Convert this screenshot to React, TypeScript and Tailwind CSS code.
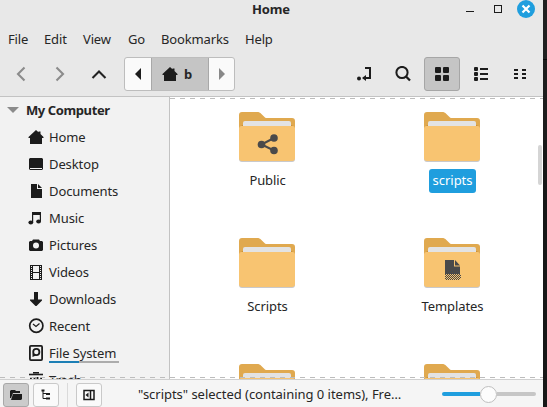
import React from "react";

const INK = "#1c1c1c";

const menus = [
  { label: "File", w: "w-[20px]" },
  { label: "Edit", w: "w-[23px]" },
  { label: "View", w: "w-[29px]" },
  { label: "Go", w: "w-[17px]" },
  { label: "Bookmarks", w: "w-[68px]" },
  { label: "Help", w: "w-[28px]" },
];

function HomeIcon() {
  return (
    <svg width="16" height="16" viewBox="0 0 16 16" fill={INK}>
      <path d="M8 1 L10.5 3.2 V2.5 H12.5 V5 L15.5 8 V9 H14 V15 H2 V9 H.5 V8 Z" />
    </svg>
  );
}

const places: { label: string; icon: React.ReactNode }[] = [
  { label: "Home", icon: <HomeIcon /> },
  {
    label: "Desktop",
    icon: (
      <svg width="16" height="16" viewBox="0 0 16 16">
        <path d="M2 2h12l1 1v10l-1 1H2l-1-1V3z" fill={INK} />
        <path d="M2 12h12v1H2z" fill="#f2f2f2" />
      </svg>
    ),
  },
  {
    label: "Documents",
    icon: (
      <svg width="16" height="16" viewBox="0 0 16 16">
        <path d="M3 1h6v5h5v9H3z" fill={INK} />
        <path d="M10 1l4 4h-4z" fill={INK} />
      </svg>
    ),
  },
  {
    label: "Music",
    icon: (
      <svg width="16" height="16" viewBox="0 0 16 16" fill={INK}>
        <path d="M4 2h9v9.5h-1.2V5H5.2v7.500H4z" />
        <ellipse cx="2.8" cy="12.500" rx="2.400" ry="1.900" />
        <ellipse cx="10.600" cy="11.500" rx="2.400" ry="1.900" />
      </svg>
    ),
  },
  {
    label: "Pictures",
    icon: (
      <svg width="16" height="16" viewBox="0 0 16 16">
        <path d="M5 2.500h6l1 1.500h2l1 1v8l-1 1H2l-1-1V5l1-1h2z" fill={INK} />
        <circle cx="8" cy="8.500" r="3" fill="#f2f2f2" />
      </svg>
    ),
  },
  {
    label: "Videos",
    icon: (
      <svg width="16" height="16" viewBox="0 0 16 16">
        <path d="M2 1h12v15H2z" fill={INK} />
        <path d="M5 2h6v6H5zM5 9h6v6H5z" fill="#f2f2f2" />
        <path d="M3.500 2v14M12.500 2v14" stroke="#f2f2f2" strokeDasharray="1 1" />
      </svg>
    ),
  },
  {
    label: "Downloads",
    icon: (
      <svg width="16" height="16" viewBox="0 0 16 16" fill={INK}>
        <path d="M6 1h4v7.500h4v1L8.500 15h-1L2 9.500v-1h4z" />
      </svg>
    ),
  },
  {
    label: "Recent",
    icon: (
      <svg width="16" height="16" viewBox="0 0 16 16" fill="none" stroke={INK}>
        <circle cx="8.300" cy="7.700" r="6.600" strokeWidth="1.700" />
        <path d="M5 6l3 2.500L11.500 5.500" strokeWidth="1.200" />
      </svg>
    ),
  },
  {
    label: "File System",
    icon: (
      <svg width="16" height="16" viewBox="0 0 16 16" fill="none" stroke={INK}>
        <rect x="1.900" y=".9" width="12.200" height="14.200" rx="1" strokeWidth="1.800" />
        <circle cx="8.300" cy="7" r="3.100" strokeWidth="1.800" />
        <path d="M4.500 12V8.500L8 10.500z" fill={INK} stroke="none" />
      </svg>
    ),
  },
  {
    label: "Trash",
    icon: (
      <svg width="16" height="16" viewBox="0 0 16 16" fill="none" stroke={INK}>
        <path d="M5 .8h6" strokeWidth="1.600" />
        <path d="M1 2.500h14" strokeWidth="1.600" />
        <path d="M2.900 5v9h10.200V5M6.500 5v2M9.500 5v2" strokeWidth="1.800" />
      </svg>
    ),
  },
];

const folders = [
  { label: "Public", kind: "share", selected: false },
  { label: "scripts", kind: "", selected: true },
  { label: "Scripts", kind: "", selected: false },
  { label: "Templates", kind: "template", selected: false },
  { label: "", kind: "", selected: false },
  { label: "", kind: "", selected: false },
];

function Folder({ kind }: { kind: string }) {
  return (
    <svg width="56" height="50" viewBox="0 0 56 50" className="block shrink-0">
      <path d="M0 3a3 3 0 0 1 3-3h15c2 0 3 .6 4.400 2L26 5.500c.6.500 1 .5 2 .5h25a3 3 0 0 1 3 3v12H0z" fill="#e0a94f" />
      <path d="M0 15l4-2v3H0zM56 15l-4-2v3h4z" fill="#c38a35" />
      <path d="M4 18v-7a2 2 0 0 1 2-2h44a2 2 0 0 1 2 2v7z" fill="#e3e3e3" />
      <path d="M0 17h56v30a3 3 0 0 1-3 3H3a3 3 0 0 1-3-3z" fill="#c9c9cb" />
      <path d="M0 16a2 2 0 0 1 2-2h52a2 2 0 0 1 2 2v30a3 3 0 0 1-3 3H3a3 3 0 0 1-3-3z" fill="#f8c471" />
      {kind === "share" && (
        <g fill="#4a4a4a">
          <path d="M35 26L22.500 32.500L35 38.500" fill="none" stroke="#4a4a4a" strokeWidth="2" />
          <circle cx="35" cy="26" r="3.800" />
          <circle cx="22.500" cy="32.500" r="3.800" />
          <circle cx="35" cy="38.500" r="3.800" />
        </g>
      )}
      {kind === "template" && (
        <g>
          <path d="M21 22h9v6.500h6V36H21z" fill="#4a4a4a" />
          <path d="M31 22l5 5.500h-5z" fill="#4a4a4a" />
          <g stroke="#4a4a4a" strokeDasharray="1 1">
            <path d="M21 36.500h15M21 38.500h15M21 40.500h15" />
            <path d="M22 37.500h15M22 39.500h15M22 41.500h14" />
          </g>
        </g>
      )}
    </svg>
  );
}

const dash = "h-px bg-[repeating-linear-gradient(90deg,#bdbdbd_0_5px,transparent_5px_10px)]";
const flatButton = "flex h-[34px] w-9 items-center justify-center";
const statusButton = "flex h-6 w-[26px] items-center justify-center rounded-[3px] border";

export default function App() {
  return (
    <div className="flex h-[407px] w-[547px] overflow-hidden bg-[#171717] font-['Noto_Sans',sans-serif] text-[13px] leading-[18px] text-[#262626]">
      <div className="flex w-[543px] shrink-0 flex-col">
        <header className="flex h-[97px] shrink-0 flex-col border-b border-[#c3c3c3] bg-[#e8e8e8]">
          <div className="flex h-[27px] shrink-0">
            <div className="w-[460px] pl-[252px] pt-px text-[13px] leading-[17px] font-bold">
              <span className="tracking-[-0.2px]">Home</span>
            </div>
            <svg width="83" height="20" viewBox="460 0 83 20">
              <path d="M466 11.500h8" stroke={INK} />
              <rect x="494.500" y="5.500" width="7" height="7" fill="none" stroke={INK} />
              <circle cx="526" cy="9" r="9" fill="#1f9ede" />
              <path d="M522.500 5.500l7 7m0-7l-7 7" stroke="#fff" strokeWidth="2.200" />
            </svg>
          </div>
          <nav className="flex h-6 shrink-0 items-center gap-4 px-2">
            {menus.map((m) => (
              <span key={m.label} className={`${m.w} shrink-0 whitespace-nowrap tracking-[-0.15px]`}>{m.label}</span>
            ))}
          </nav>
          <div className="flex h-[45px] items-start px-[3px] pt-1.5">
            <div className="flex gap-[3px]">
              {["M21.500 10.500l-6.500 6.500 6.500 6.500", "M14.500 10.500l6.500 6.500-6.500 6.500", "M11.500 21l6.500-6.500 6.500 6.500"].map((d, i) => (
                <button key={d} className={flatButton}>
                  <svg width="36" height="34" fill="none" stroke={i === 2 ? "#222" : "#8b8b8b"} strokeWidth="2.100">
                    <path d={d} />
                  </svg>
                </button>
              ))}
            </div>
            <div className="ml-[7px] flex h-[34px] w-[111px] overflow-hidden rounded-[3px] border border-[#bdbdbd] bg-[#fafafa]">
              <div className="flex w-[26px] items-center justify-center">
                <svg width="6" height="12"><path d="M6 0v12L0 6z" fill={INK} /></svg>
              </div>
              <div className="flex w-[58px] items-center border-x border-[#a8a8a8] bg-[#c5c5c5] pl-[10px] font-bold">
                <HomeIcon />
                <span className="ml-[6px]">b</span>
              </div>
              <div className="flex flex-1 items-center justify-center">
                <svg width="6" height="12"><path d="M0 0v12L6 6z" fill="#888" /></svg>
              </div>
            </div>
            <div className="ml-auto mr-[2px] flex gap-[3px]">
              <button className={flatButton}>
                <svg width="16" height="16" fill="none" stroke={INK} strokeWidth="2">
                  <path d="M9 2h5v10H7" />
                  <path d="M10 9v6L6 12z" fill={INK} stroke="none" />
                  <circle cx="3" cy="12.500" r="2" fill={INK} stroke="none" />
                </svg>
              </button>
              <button className={`${flatButton} pr-px`}>
                <svg width="16" height="16" fill="none" stroke={INK} strokeWidth="2">
                  <circle cx="7" cy="6.500" r="5.600" />
                  <path d="M11 10.500l4 4" strokeWidth="2.300" />
                </svg>
              </button>
              <button className={`${flatButton} rounded-[3px] border border-[#a6a6a6] bg-[#c5c5c5]`}>
                <svg width="14" height="14" fill={INK}>
                  <rect width="6" height="6" rx="1" /><rect x="8" width="6" height="6" rx="1" />
                  <rect y="8" width="6" height="6" rx="1" /><rect x="8" y="8" width="6" height="6" rx="1" />
                </svg>
              </button>
              <button className={flatButton}>
                <svg width="14" height="14" fill={INK}>
                  <rect width="4" height="4" rx="1" /><rect y="5" width="4" height="4" rx="1" /><rect y="10" width="4" height="4" rx="1" />
                  <path d="M6 1h8v2H6zM6 6h8v2H6zM6 11h8v2H6z" />
                </svg>
              </button>
              <button className={flatButton}>
                <svg width="12" height="10" fill={INK}>
                  <path d="M0 0h4v2H0zM8 0h4v2H8zM0 4h4v2H0zM8 4h4v2H8zM0 8h4v2H0zM8 8h4v2H8z" />
                </svg>
              </button>
            </div>
          </div>
        </header>

        <div className="relative flex h-[282px] shrink-0 overflow-hidden">
          <aside className="w-[170px] shrink-0 border-r border-[#c3c3c3] bg-[#f2f2f2]">
            <div className="flex h-[26px] items-center gap-[7px] pb-px pl-[7px] font-bold">
              <svg width="12" height="6"><path d="M0 0h12L6 6z" fill="#8b8b8b" /></svg>
              <span className="whitespace-nowrap tracking-[-0.4px]">My Computer</span>
            </div>
            {places.map((p) => (
              <div key={p.label} className="flex h-[27px] items-center gap-[5px] pl-7">
                {p.icon}
                <div className="relative whitespace-nowrap tracking-[-0.1px]">
                  {p.label}
                  {p.label === "File System" && (
                    <div className="absolute -bottom-px left-0 flex h-[2px] w-[70px] bg-[#acacac]">
                      <div className="w-[30px] bg-[#1c7fb5]" />
                    </div>
                  )}
                </div>
              </div>
            ))}
          </aside>
          <main className="grid w-[373px] auto-rows-[126px] grid-cols-[185px_185px] bg-white pl-1 pt-[15px]">
            {folders.map((f, i) => (
              <div key={i} className="flex flex-col items-center">
                <Folder kind={f.kind} />
                <span
                  className={`ml-[2px] flex h-6 items-center rounded-[3px] ${
                    f.selected ? "mt-[7px] w-[47px] justify-center bg-[#1f9ede] pb-[2px] text-white" : "mt-1.5 tracking-[-0.1px]"
                  }`}
                >
                  {f.label}
                </span>
              </div>
            ))}
          </main>
          <div className={`absolute left-[170px] right-0 top-px ${dash}`} />
          <div className={`absolute inset-x-0 bottom-px ${dash}`} />
          <div className="absolute right-px top-12 h-10 w-1 rounded-full bg-[#d5d5d5]" />
        </div>

        <footer className="flex h-7 shrink-0 items-center border-t border-[#d0d0d0] bg-[#f5f5f5] pl-[3px] pt-[2px]">
          <button className={`${statusButton} border-[#a8a8a8] bg-[#cbcbcb]`}>
            <svg width="12" height="12" fill={INK}>
              <path d="M0 2l1-1h4l1 1h4v2H3L1 9H0zM3 5h9v5l-1 1H1z" />
            </svg>
          </button>
          <button className={`${statusButton} ml-1 border-[#c9c9c9] bg-[#fafafa]`}>
            <svg width="12" height="12" fill="none" stroke={INK}>
              <path d="M3 1v8.500h3M3 4.500h3" /><path d="M1.500 1.500h3M6 5h4M6 9.500h4" strokeWidth="2" />
            </svg>
          </button>
          <div className="ml-2 h-6 w-px bg-[#dadada]" />
          <button className={`${statusButton} ml-2 border-[#c9c9c9] bg-[#fafafa]`}>
            <svg width="12" height="12">
              <path d="M1 1.500h10v9H1zM7.500 1.500v9" fill="none" stroke={INK} strokeWidth="1.500" />
              <path d="M5.500 3.500v5L2.500 6z" fill={INK} />
            </svg>
          </button>
          <span className="ml-[36px] w-[304px] pb-[2px] tracking-[-0.03px] whitespace-nowrap">"scripts" selected (containing 0 items), Fre…</span>
          <div className="flex h-[18px] w-[94px] items-center pb-px">
            <div className="h-1 w-[38px] rounded-l-full bg-[#1f9ede]" />
            <div className="size-[17px] rounded-full border border-[#bfbfbf] bg-[#fcfcfc]" />
            <div className="h-1 flex-1 rounded-r-full bg-[#c6c6c6]" />
          </div>
        </footer>
      </div>
      <div className="flex w-1 flex-col bg-[#181818]">
        <div className="h-[59px] bg-[#202020]" />
        <div className="h-px bg-[#080808]" />
        <div className="h-20 bg-[#1d1d1d]" />
      </div>
    </div>
  );
}
